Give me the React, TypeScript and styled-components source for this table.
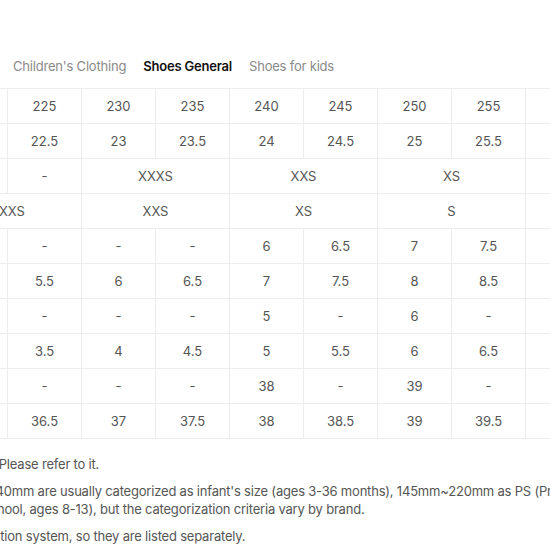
import React from "react";
import styled, { createGlobalStyle } from "styled-components";

const GlobalStyle = createGlobalStyle`
  html, body {
    margin: 0;
    padding: 0;
    background: #ffffff;
    overflow: hidden;
  }
  body {
    font-family: Inter, "Noto Sans", "Liberation Sans", sans-serif;
    -webkit-font-smoothing: antialiased;
  }
`;

const Page = styled.div`
  width: 550px;
  height: 550px;
  overflow: hidden;
`;

const TabBar = styled.nav`
  display: flex;
  align-items: center;
  gap: 17px;
  height: 44px;
  padding: 44px 13px 0;
`;

const Tab = styled.span<{ $active?: boolean }>`
  font-size: 13px;
  line-height: 16px;
  letter-spacing: -0.2px;
  white-space: nowrap;
  color: ${(p) => (p.$active ? "#111111" : "#8a8a8a")};
  font-weight: ${(p) => (p.$active ? 600 : 400)};
`;

const TableScroller = styled.div`
  margin-left: -261px;
`;

const Table = styled.table`
  width: 1008px;
  border-collapse: collapse;
  table-layout: fixed;
  border-top: 1px solid #ededed;
`;

const LabelCol = styled.col`
  width: 120px;
`;

const SizeCol = styled.col`
  width: 74px;
`;

const Cell = styled.td`
  height: 34px;
  padding: 0;
  border: 1px solid #ededed;
  text-align: center;
  vertical-align: middle;
  font-size: 13px;
  color: #555555;
  white-space: nowrap;
`;

const LabelCell = styled.th`
  height: 34px;
  padding: 0 12px;
  border: 1px solid #ededed;
  text-align: left;
  font-size: 13px;
  font-weight: 500;
  color: #333333;
  white-space: nowrap;
  background: #fafafa;
`;

const Notes = styled.ul`
  list-style: none;
  margin: 17px 0 0 -84px;
  padding: 0;
  width: 1100px;
  display: flex;
  flex-direction: column;
  gap: 9.5px;
`;

const Note = styled.li`
  font-size: 13px;
  line-height: 17.5px;
  letter-spacing: -0.2px;
  color: #555555;
  white-space: nowrap;
`;

type Span = { text: string; span?: number };

const sizes = [215, 220, 225, 230, 235, 240, 245, 250, 255, 260, 265, 270];

const plain = (vals: string[]): Span[] => vals.map((text) => ({ text }));

const rows: { label: string; cells: Span[] }[] = [
  { label: "mm", cells: plain(sizes.map(String)) },
  { label: "cm", cells: plain(sizes.map((s) => String(s / 10))) },
  {
    label: "Women (Letter)",
    cells: [
      { text: "-" },
      { text: "-" },
      { text: "-" },
      { text: "XXXS", span: 2 },
      { text: "XXS", span: 2 },
      { text: "XS", span: 2 },
      { text: "S", span: 2 },
      { text: "M" },
    ],
  },
  {
    label: "Men (Letter)",
    cells: [
      { text: "-" },
      { text: "XXXS", span: 2 },
      { text: "XXS", span: 2 },
      { text: "XS", span: 2 },
      { text: "S", span: 2 },
      { text: "M", span: 2 },
      { text: "L" },
    ],
  },
  { label: "US Women (Nike)", cells: plain(["-", "-", "-", "-", "-", "6", "6.5", "7", "7.5", "8", "8.5", "9"]) },
  { label: "US Women", cells: plain(["4.5", "5", "5.5", "6", "6.5", "7", "7.5", "8", "8.5", "9", "9.5", "10"]) },
  { label: "US Men (Nike)", cells: plain(["-", "-", "-", "-", "-", "5", "-", "6", "-", "7", "-", "8"]) },
  { label: "US Men", cells: plain(["2.5", "3", "3.5", "4", "4.5", "5", "5.5", "6", "6.5", "7", "7.5", "8"]) },
  { label: "EU (Nike)", cells: plain(["-", "-", "-", "-", "-", "38", "-", "39", "-", "40", "-", "41"]) },
  { label: "EU", cells: plain(["35.5", "36", "36.5", "37", "37.5", "38", "38.5", "39", "39.5", "40", "40.5", "41"]) },
];

export default function App() {
  return (
    <Page>
      <GlobalStyle />
      <TabBar>
        <Tab>Children's Clothing</Tab>
        <Tab $active>Shoes General</Tab>
        <Tab>Shoes for kids</Tab>
      </TabBar>
      <TableScroller>
        <Table>
          <colgroup>
            <LabelCol />
            {sizes.map((s) => (
              <SizeCol key={s} />
            ))}
          </colgroup>
          <tbody>
            {rows.map((row) => (
              <tr key={row.label}>
                <LabelCell scope="row">{row.label}</LabelCell>
                {row.cells.map((c, i) => (
                  <Cell key={i} colSpan={c.span ?? 1}>
                    {c.text}
                  </Cell>
                ))}
              </tr>
            ))}
          </tbody>
        </Table>
      </TableScroller>
      <Notes>
        <Note>Sizing varies. Please refer to it.</Note>
        <Note>
          Those up to 140mm are usually categorized as infant's size (ages 3-36 months), 145mm~220mm as PS (Preschool, ages 4-7), 225mm~ as
          <br />
          GS (Grade School, ages 8-13), but the categorization criteria vary by brand.
        </Note>
        <Note>Size classification system, so they are listed separately.</Note>
      </Notes>
    </Page>
  );
}
